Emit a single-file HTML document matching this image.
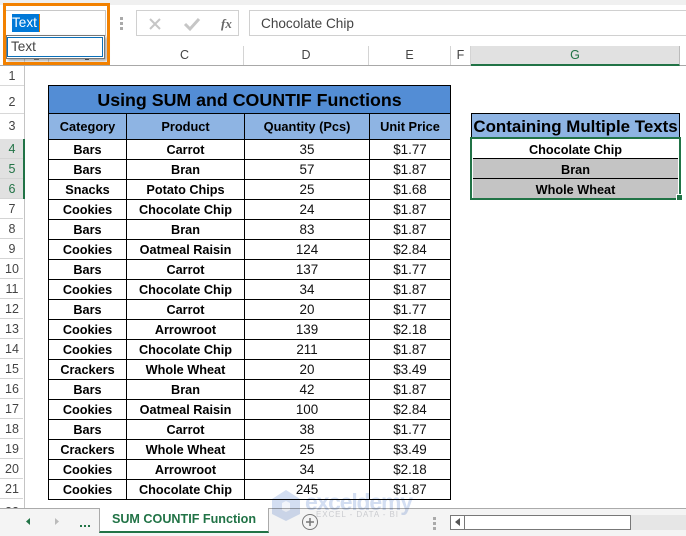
<!DOCTYPE html>
<html><head><meta charset="utf-8">
<style>
html,body{margin:0;padding:0;background:#fff}
#p{position:relative;width:686px;height:536px;overflow:hidden;background:#fff;font-family:"Liberation Sans",sans-serif;color:#000}
.a{position:absolute;box-sizing:border-box}
.h{position:absolute;text-align:center;font-size:12.5px;color:#444;line-height:20px;width:24px;left:0;top:0}
.c{position:absolute;text-align:center;font-size:12.5px;color:#444;top:46px;height:19px;line-height:19px;border-right:1px solid #d4d4d4;box-sizing:border-box}
table{border-collapse:collapse;table-layout:fixed;position:absolute}
td{border:1px solid #000;padding:1px 0 0;text-align:center;font-size:12.7px;font-weight:bold;height:18px;line-height:18px;white-space:nowrap;overflow:hidden}
td.n{font-weight:normal;font-size:13.4px;color:#111;padding:0;height:19px;line-height:19px}
.th td{background:#8eb4e3;font-size:12.8px;padding:0}
</style></head><body><div id="p">
<div class="a" style="left:0;top:0;width:686px;height:5px;background:#f0f0f0"></div>
<div class="a" style="left:5px;top:10px;width:101px;height:26px;border:1px solid #c8c8c8"></div>
<div class="a" style="left:12px;top:14px;width:27px;height:18px;background:#0078d7"></div>
<div class="a" style="left:12px;top:14px;width:28px;height:18px;line-height:18px;color:#fff;font-size:13.6px;border-right:1px solid #e87b00">Text</div>
<div class="a" style="left:120px;top:17px;width:3px;height:3px;background:#aaa;box-shadow:0 5px 0 #aaa,0 10px 0 #aaa"></div>
<div class="a" style="left:136px;top:10px;width:103px;height:26px;border:1px solid #d0d0d0"></div>
<svg class="a" style="left:136px;top:10px" width="104" height="26"><path d="M14 9l10 10M24 9L14 19" stroke="#c6c6c6" stroke-width="2" fill="none"/><path d="M49 14l5 5 9-10" stroke="#c6c6c6" stroke-width="3" fill="none"/><text x="85" y="18" font-family="Liberation Serif" font-style="italic" font-weight="bold" font-size="13" fill="#666">fx</text></svg>
<div class="a" style="left:249px;top:10px;width:437px;height:26px;border:1px solid #d0d0d0;border-right:0;padding-left:11px;line-height:25px;font-size:13.6px;color:#444">Chocolate Chip</div>

<div class="a" style="left:0;top:46px;width:686px;height:20px;border-bottom:1px solid #a8a8a8"></div>
<div class="a" style="left:24px;top:59px;width:1px;height:6px;background:#d4d4d4"></div>
<div class="a" style="left:48px;top:59px;width:1px;height:6px;background:#d4d4d4"></div>
<div class="a" style="left:34px;top:58px;width:5px;height:2px;background:#888"></div>
<div class="a" style="left:85px;top:58px;width:4px;height:2px;background:#666"></div>
<div class="c" style="left:126px;width:118px">C</div>
<div class="c" style="left:244px;width:125px;text-align:center">D</div>
<div class="c" style="left:369px;width:82px">E</div>
<div class="c" style="left:451px;width:20px">F</div>
<div class="a" style="left:471px;top:46px;width:209px;height:20px;background:#e1e1e1;border-bottom:2px solid #217346;border-right:1px solid #bbb;text-align:center;font-size:12.5px;line-height:19px;color:#217346">G</div>

<div class="a" style="left:24px;top:66px;width:1px;height:442px;background:#c4c4c4"></div>
<div class="a" style="left:0;top:139px;width:25px;height:60px;background:#e1e1e1;border-right:2px solid #217346"></div>
<div class="a" style="left:0;top:158px;width:23px;height:342px;background:repeating-linear-gradient(to bottom,#d4d4d4 0,#d4d4d4 1px,transparent 1px,transparent 20px)"></div>
<div id="rh">
<div class="h" style="top:66px">1</div><div class="h" style="top:92px">2</div><div class="h" style="top:116px">3</div>
<div class="h" style="top:139px;color:#217346">4</div><div class="h" style="top:159px;color:#217346">5</div><div class="h" style="top:179px;color:#217346">6</div>
<div class="h" style="top:199px">7</div><div class="h" style="top:219px">8</div><div class="h" style="top:239px">9</div><div class="h" style="top:259px">10</div><div class="h" style="top:279px">11</div><div class="h" style="top:299px">12</div><div class="h" style="top:319px">13</div><div class="h" style="top:339px">14</div><div class="h" style="top:359px">15</div><div class="h" style="top:379px">16</div><div class="h" style="top:399px">17</div><div class="h" style="top:419px">18</div><div class="h" style="top:439px">19</div><div class="h" style="top:459px">20</div><div class="h" style="top:479px">21</div><div class="h" style="top:502px">22</div>
</div>
<div class="a" style="left:0;top:85px;width:24px;height:1px;background:#d8d8d8"></div>
<div class="a" style="left:0;top:113px;width:24px;height:1px;background:#d8d8d8"></div>

<table style="left:48px;top:85px;width:402px">
<colgroup><col style="width:78px"><col style="width:118px"><col style="width:125px"><col style="width:81px"></colgroup>
<tr><td colspan="4" style="background:#538dd5;height:26px;line-height:26px;font-size:17.8px">Using SUM and COUNTIF Functions</td></tr>
<tr class="th"><td style="height:25px">Category</td><td>Product</td><td>Quantity (Pcs)</td><td>Unit Price</td></tr>
<tr><td>Bars</td><td>Carrot</td><td class="n">35</td><td class="n">$1.77</td></tr>
<tr><td>Bars</td><td>Bran</td><td class="n">57</td><td class="n">$1.87</td></tr>
<tr><td>Snacks</td><td>Potato Chips</td><td class="n">25</td><td class="n">$1.68</td></tr>
<tr><td>Cookies</td><td>Chocolate Chip</td><td class="n">24</td><td class="n">$1.87</td></tr>
<tr><td>Bars</td><td>Bran</td><td class="n">83</td><td class="n">$1.87</td></tr>
<tr><td>Cookies</td><td>Oatmeal Raisin</td><td class="n">124</td><td class="n">$2.84</td></tr>
<tr><td>Bars</td><td>Carrot</td><td class="n">137</td><td class="n">$1.77</td></tr>
<tr><td>Cookies</td><td>Chocolate Chip</td><td class="n">34</td><td class="n">$1.87</td></tr>
<tr><td>Bars</td><td>Carrot</td><td class="n">20</td><td class="n">$1.77</td></tr>
<tr><td>Cookies</td><td>Arrowroot</td><td class="n">139</td><td class="n">$2.18</td></tr>
<tr><td>Cookies</td><td>Chocolate Chip</td><td class="n">211</td><td class="n">$1.87</td></tr>
<tr><td>Crackers</td><td>Whole Wheat</td><td class="n">20</td><td class="n">$3.49</td></tr>
<tr><td>Bars</td><td>Bran</td><td class="n">42</td><td class="n">$1.87</td></tr>
<tr><td>Cookies</td><td>Oatmeal Raisin</td><td class="n">100</td><td class="n">$2.84</td></tr>
<tr><td>Bars</td><td>Carrot</td><td class="n">38</td><td class="n">$1.77</td></tr>
<tr><td>Crackers</td><td>Whole Wheat</td><td class="n">25</td><td class="n">$3.49</td></tr>
<tr><td>Cookies</td><td>Arrowroot</td><td class="n">34</td><td class="n">$2.18</td></tr>
<tr><td>Cookies</td><td>Chocolate Chip</td><td class="n">245</td><td class="n">$1.87</td></tr>
</table>

<div class="a" style="left:471px;top:113px;width:209px;height:26px;background:#8eb4e3;border:1px solid #000;text-align:center;font-weight:bold;font-size:16.9px;line-height:26px;white-space:nowrap;overflow:hidden">Containing Multiple Texts</div>
<div class="a" style="left:473px;top:139px;width:205px;height:59px;background:#fff;font-weight:bold;font-size:12.7px;text-align:center;line-height:22px">
<div style="height:20px;border-bottom:1px solid #000;box-sizing:border-box">Chocolate Chip</div>
<div style="height:20px;background:#c4c4c4;border-bottom:1px solid #000;box-sizing:border-box">Bran</div>
<div style="height:19px;background:#c4c4c4">Whole Wheat</div>
</div>
<div class="a" style="left:470px;top:137px;width:211px;height:63px;border:2px solid #217346"></div>
<div class="a" style="left:676px;top:194px;width:7px;height:7px;background:#217346;border:1px solid #fff"></div>

<!-- name box dropdown -->
<div class="a" style="left:6px;top:35px;width:99px;height:24px;background:#fff;border:1px solid #777;box-shadow:2px 2px 3px rgba(0,0,0,.35)"></div>
<div class="a" style="left:7px;top:37px;width:96px;height:20px;border:1px solid #0a6fb8;font-size:13.6px;line-height:18px;padding-left:3px;color:#444">Text</div>
<div class="a" style="left:3px;top:3px;width:107px;height:62px;border:3px solid #f28100"></div>

<!-- bottom tabs -->
<div class="a" style="left:0;top:508px;width:686px;height:28px;background:#f4f4f4"></div>
<div class="a" style="left:0;top:508px;width:100px;height:1px;background:#aaa"></div>
<div class="a" style="left:268px;top:508px;width:418px;height:1px;background:#aaa"></div>
<div class="a" style="left:99px;top:508px;width:170px;height:25px;background:#fff;border-left:1px solid #aaa;border-right:1px solid #aaa;border-bottom:2px solid #217346;text-align:center;font-weight:bold;font-size:12.6px;line-height:23px;color:#217346;white-space:nowrap">SUM COUNTIF Function</div>
<svg class="a" style="left:0;top:508px" width="100" height="28"><path d="M30 10v7l-4-3.500z" fill="#217346"/><path d="M55 10v7l4-3.500z" fill="#bbb"/><rect x="80" y="17" width="2" height="2" fill="#217346"/><rect x="84" y="17" width="2" height="2" fill="#217346"/><rect x="88" y="17" width="2" height="2" fill="#217346"/></svg>
<svg class="a" style="left:300px;top:513px" width="20" height="18"><circle cx="10" cy="9" r="7.500" fill="none" stroke="#777" stroke-width="1"/><path d="M10 5v8M6 9h8" stroke="#777" stroke-width="1.500"/></svg>

<!-- scrollbar -->
<div class="a" style="left:420px;top:509px;width:266px;height:27px;background:#f4f4f4"></div>
<div class="a" style="left:433px;top:517px;width:3px;height:3px;background:#aaa;box-shadow:0 5px 0 #aaa,0 10px 0 #aaa"></div>
<div class="a" style="left:450px;top:515px;width:236px;height:15px;background:#e6e6e6"></div>
<div class="a" style="left:450px;top:515px;width:181px;height:15px;background:#fff;border:1px solid #777"></div>
<div class="a" style="left:464px;top:515px;width:1px;height:15px;background:#777"></div>
<svg class="a" style="left:454px;top:518px" width="8" height="10"><path d="M6 0v8L1 4z" fill="#555"/></svg>

<!-- watermark -->
<svg class="a" style="left:270px;top:486px;mix-blend-mode:multiply" width="150" height="36"><path d="M2 13L16 4l14 9v15l-14 7-14-7z" fill="#d3def2"/><path d="M12 17l4-2 4 2v7l-4 2-4-2z" fill="#f2f5fb"/><text x="35" y="24" font-size="23" font-weight="bold" fill="#d3def2" textLength="108" font-family="Liberation Sans">exceldemy</text><text x="46" y="31" font-size="8" fill="#d4d6da" textLength="82" font-family="Liberation Sans">EXCEL - DATA - BI</text></svg>
</div></body></html>
